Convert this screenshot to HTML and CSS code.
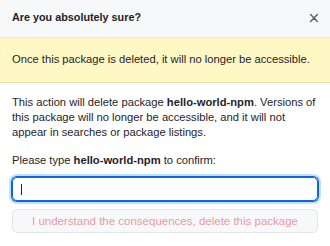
FILE: index.html
```html
<!DOCTYPE html>
<html>
<head>
<meta charset="utf-8">
<link rel="stylesheet" href="styles.css">
</head>
<body>
<div class="dialog">
  <div class="header">
    <h1 class="title">Are you absolutely sure?</h1>
    <button class="close" aria-label="Close">
      <svg width="12" height="12" viewBox="0 0 12 12"><path d="M2.6 2.6 9.4 9.4M9.4 2.6 2.6 9.4" stroke="#57606a" stroke-width="1.4" stroke-linecap="round" fill="none"/></svg>
    </button>
  </div>
  <div class="flash">Once this package is deleted, it will no longer be accessible.</div>
  <div class="body">
    <p class="text">This action will delete package <b>hello-world-npm</b>. Versions of this package will no longer be accessible, and it will not appear in searches or package listings.</p>
    <p class="label">Please type <b>hello-world-npm</b> to confirm:</p>
    <div class="input"><span class="caret"></span></div>
    <button class="danger" disabled>I understand the consequences, delete this package</button>
  </div>
</div>
</body>
</html>
```
FILE: styles.css
```css
* { box-sizing: border-box; }
html, body { margin: 0; padding: 0; background: #ffffff; }
body {
  font-family: "Liberation Sans", Arial, sans-serif;
  color: #1f2328;
  font-size: 11.2px;
  line-height: 15px;
}
.dialog { width: 330px; height: 246px; display: flex; flex-direction: column; }
.header {
  background: #f6f8fa;
  height: 37px;
  padding: 0 10px 0 12px;
  display: flex;
  align-items: center;
  justify-content: space-between;
}
.title {
  margin: 0 0 2px;
  font-size: 10.8px;
  font-weight: bold;
  line-height: 15px;
}
.close {
  border: 0;
  background: none;
  padding: 0;
  width: 12px;
  height: 12px;
  margin-bottom: 2px;
  display: flex;
}
.flash {
  background: #fff8c5;
  border-top: 1px solid #f5eab4;
  border-bottom: 1px solid #efe0a6;
  padding: 14px 12px 15px;
}
.body { padding: 12px 12px 12px; display: flex; flex-direction: column; }
.text { margin: 0 0 13px; }
.label { margin: 0 0 9px; }
.input {
  height: 24px;
  border: 1px solid #0969da;
  border-radius: 5px;
  box-shadow: 0 0 0 1px #0969da, 0 0 0 3px rgba(84, 160, 255, 0.35);
  padding-left: 8px;
  display: flex;
  align-items: center;
}
.caret { width: 1px; height: 11px; background: #1f2328; }
.danger {
  margin-top: 8px;
  height: 24px;
  border: 1px solid #e3e6ea;
  border-radius: 5px;
  background: #f6f8fa;
  color: #eb9aa0;
  font-family: "Liberation Sans", Arial, sans-serif;
  font-size: 11.5px;
  padding: 0;
}
```
